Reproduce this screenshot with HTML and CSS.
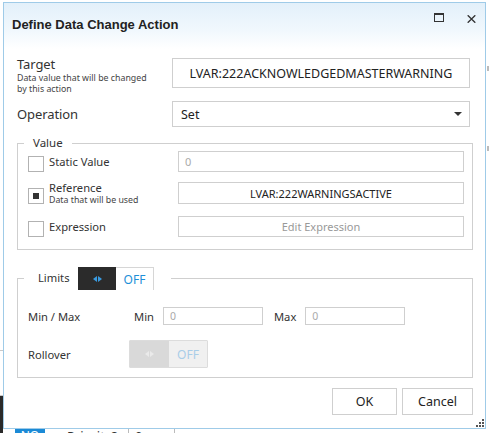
FILE: index.html
```html
<!DOCTYPE html>
<html>
<head>
<meta charset="utf-8">
<link rel="stylesheet" href="styles.css">
</head>
<body>
<div class="page">
  <div class="lstrip">
    <div class="lstrip-line l1"></div>
    <div class="lstrip-line l2"></div>
    <div class="lstrip-dark"></div>
  </div>
  <div class="col">
    <div class="window">
      <div class="titlebar">
        <div class="title">Define Data Change Action</div>
        <div class="tb-icons">
          <svg class="ic-max" width="10" height="9" viewBox="0 0 10 9"><rect x="0.5" y="1" width="9" height="7.5" fill="none" stroke="#333" stroke-width="1"/><line x1="0" y1="1" x2="10" y2="1" stroke="#333" stroke-width="2"/></svg>
          <svg class="ic-close" width="9" height="8" viewBox="0 0 9 8"><path d="M0.7 0.3 L8.3 7.7 M8.3 0.3 L0.7 7.7" stroke="#333" stroke-width="1.4" fill="none"/></svg>
        </div>
      </div>
      <div class="body">
        <div class="row row-target">
          <div class="lab">
            <div class="lab-main">Target</div>
            <div class="lab-sub">Data value that will be changed<br>by this action</div>
          </div>
          <div class="field field-target">LVAR:222ACKNOWLEDGEDMASTERWARNING</div>
        </div>
        <div class="row row-op">
          <div class="lab"><div class="lab-main">Operation</div></div>
          <div class="field field-select"><span>Set</span><span class="arrow"></span></div>
        </div>
        <fieldset class="group group-value">
          <legend class="leg-value">Value</legend>
          <div class="vrow vrow-static">
            <span class="cb"></span>
            <span class="vlab">Static Value</span>
            <div class="vfield vf-static">0</div>
          </div>
          <div class="vrow vrow-ref">
            <span class="cb cb-on"><span class="cb-dot"></span></span>
            <span class="vlab"><span class="vlab-main">Reference</span><span class="vlab-sub">Data that will be used</span></span>
            <div class="vfield vf-ref">LVAR:222WARNINGSACTIVE</div>
          </div>
          <div class="vrow vrow-expr">
            <span class="cb"></span>
            <span class="vlab">Expression</span>
            <div class="vfield vf-btn">Edit Expression</div>
          </div>
        </fieldset>
        <fieldset class="group group-limits">
          <legend class="leg-limits">
            <span class="leg-text">Limits</span>
            <span class="toggle">
              <span class="tg-knob"><span class="tri tri-l"></span><span class="tri tri-r"></span></span>
              <span class="tg-off">OFF</span>
            </span>
          </legend>
          <div class="lrow lrow-minmax">
            <span class="llab">Min / Max</span>
            <span class="mlab mlab-min">Min</span>
            <div class="mfield">0</div>
            <span class="mlab mlab-max">Max</span>
            <div class="mfield">0</div>
          </div>
          <div class="lrow lrow-roll">
            <span class="llab">Rollover</span>
            <span class="toggle toggle-dis">
              <span class="tg-knob"><span class="tri tri-l"></span><span class="tri tri-r"></span></span>
              <span class="tg-off">OFF</span>
            </span>
          </div>
        </fieldset>
        <div class="buttons">
          <div class="btn btn-ok">OK</div>
          <div class="btn btn-cancel">Cancel</div>
        </div>
      </div>
      <div class="grip">
        <span class="gd g1"></span><span class="gd g2"></span><span class="gd g3"></span><span class="gd g4"></span><span class="gd g5"></span><span class="gd g6"></span>
      </div>
    </div>
    <div class="bgrow">
      <span class="bg-no">NO</span>
      <span class="bg-prio">Priority?</span>
      <span class="bg-cell">0</span>
    </div>
  </div>
  <div class="rstrip">
    <div class="rmark m1"></div>
    <div class="rmark m2"></div>
  </div>
</div>
</body>
</html>
```

FILE: styles.css
```css
* { box-sizing: border-box; }
html, body { margin: 0; padding: 0; background: #fff; }
body {
  font-family: "Noto Sans", "Open Sans", sans-serif;
  color: #333;
  width: 489px;
  height: 433px;
  overflow: hidden;
}
.page { display: flex; width: 489px; height: 433px; }
.lstrip { width: 3px; flex: none; }
.lstrip-line { height: 1px; background: #c9c9c9; }
.l1 { margin-top: 350px; }
.l2 { margin-top: 44px; }
.lstrip-dark { height: 38px; background: #2a2a2a; }
.col { width: 483px; flex: none; padding-top: 2px; }
.rstrip { flex: 1; }
.rmark { width: 2px; height: 5px; background: #bbb; margin-left: 1px; }
.m1 { margin-top: 66px; }
.m2 { margin-top: 75px; }

.window {
  position: relative;
  width: 483px;
  height: 427px;
  border: 1px solid #9fcbe8;
  background: linear-gradient(#e3f0fa 0px, #f1f8fd 28px, #ffffff 46px);
}
.titlebar {
  height: 42px;
  display: flex;
  align-items: center;
  justify-content: space-between;
  padding: 0 9px 0 8px;
}
.title {
  font-family: "Liberation Sans", Arial, sans-serif;
  font-weight: bold;
  font-size: 13px;
  color: #222;
  margin-top: 1px;
}
.tb-icons { display: flex; align-items: flex-start; gap: 23px; margin-top: -12px; }
.ic-max { display: block; }
.ic-close { display: block; margin-top: 2px; }

.body { padding: 0 11px 0 13px; }
.row { display: flex; }
.lab { width: 155px; flex: none; }
.lab-main { font-size: 13px; color: #333; line-height: 16px; letter-spacing: -0.1px; }
.lab-sub { font-size: 8.8px; color: #444; line-height: 11px; margin-top: 1px; }
.row-target { margin-top: 11px; height: 45px; }
.field {
  border: 1px solid #cfcfcf;
  background: #fff;
  width: 298px;
  font-size: 12.5px;
  color: #222;
}
.field-target {
  height: 30px;
  margin-top: 2px;
  display: flex; align-items: center; justify-content: center;
}
.row-op { align-items: center; height: 26px; }
.row-op .lab { margin-top: -1px; }
.field-select {
  height: 26px;
  display: flex; align-items: center; justify-content: space-between;
  padding: 0 7px 0 8px;
}
.arrow {
  width: 0; height: 0;
  border-left: 4px solid transparent;
  border-right: 4px solid transparent;
  border-top: 4px solid #333;
}

.group {
  border: 1px solid #cfcfcf;
  margin: 0;
  width: 456px;
  padding: 0;
  min-inline-size: 0;
}
.group-value { margin-top: 9px; height: 114px; }
.leg-value { font-size: 11.5px; color: #333; padding: 0 9px; margin-left: 6px; line-height: 14px; height: 14px; }
.vrow { display: flex; align-items: flex-end; margin-left: 10px; }
.cb {
  width: 16px; height: 16px; flex: none;
  border: 1px solid #b2b2b2;
  background: #fff;
  display: flex; align-items: center; justify-content: center;
}
.cb-dot { width: 6px; height: 6px; background: #333; }
.vlab { width: 134px; flex: none; padding-left: 5px; font-size: 11.2px; color: #333; align-self: center; }
.vlab-main { display: block; line-height: 13px; }
.vlab-sub { display: block; font-size: 8.8px; line-height: 11px; color: #444; margin-top: 1px; }
.vfield {
  width: 286px; height: 21px;
  border: 1px solid #cfcfcf;
  font-size: 11px;
  display: flex; align-items: center;
}
.vf-static { color: #aaa; padding-left: 6px; }
.vf-ref { justify-content: center; color: #222; height: 22px; }
.vf-btn { justify-content: center; color: #999; height: 21px; }
.vrow-static { margin-top: 1px; height: 21px; }
.vrow-ref { margin-top: 10px; height: 22px; }
.vrow-ref .vlab { margin-top: 1px; }
.vrow-expr { margin-top: 12px; height: 21px; }

.group-limits { margin-top: 17px; height: 111px; }
.leg-limits { display: flex; align-items: center; padding: 0 17px 0 14px; margin-left: 6px; height: 23px; }
.leg-text { font-size: 11.2px; color: #333; margin-right: 12px; margin-top: -3px; width: 28px; }
.toggle { display: flex; height: 23px; }
.tg-knob {
  width: 38px; background: #2b2b2b;
  display: flex; align-items: center; justify-content: center; gap: 1px;
}
.tri { width: 0; height: 0; border-top: 3px solid transparent; border-bottom: 3px solid transparent; }
.tri-l { border-right: 4px solid #3a9be0; }
.tri-r { border-left: 4px solid #3a9be0; }
.tg-off {
  width: 38px;
  border: 1px solid #d6d6d6; border-left: none; border-bottom: none;
  color: #1e8fd8; font-size: 12px;
  display: flex; align-items: center; justify-content: center;
  background: #fff;
}
.lrow { display: flex; align-items: center; margin-left: 10px; }
.llab { width: 106px; flex: none; font-size: 11.2px; color: #333; }
.lrow-minmax { margin-top: 17px; height: 18px; }
.mlab { font-size: 11.2px; color: #333; }
.mlab-min { margin-right: 9px; }
.mlab-max { margin-left: 11px; margin-right: 9px; }
.mfield {
  width: 100px; height: 18px;
  border: 1px solid #cfcfcf;
  font-size: 10.5px; color: #aaa;
  padding-left: 6px;
  display: flex; align-items: center;
}
.lrow-roll { margin-top: 15px; }
.toggle-dis { height: 28px; border: 1px solid #dcdcdc; border-radius: 1px; margin-left: -5px; }
.toggle-dis .tg-knob { background: #d9d9d9; width: 39px; }
.toggle-dis .tri-l { border-right-color: #eaeaea; }
.toggle-dis .tri-r { border-left-color: #eaeaea; }
.toggle-dis .tg-off { background: #f0f0f0; border: none; color: #a9cde8; width: 38px; font-size: 12px; }

.buttons { display: flex; justify-content: flex-end; gap: 5px; margin-top: 10px; width: 456px; }
.btn {
  height: 27px;
  border: 1px solid #cfcfcf;
  background: #fff;
  font-size: 12.5px;
  color: #222;
  display: flex; align-items: center; justify-content: center;
}
.btn-ok { width: 65px; }
.btn-cancel { width: 71px; }

.grip { position: absolute; right: 1px; bottom: 0px; width: 9px; height: 9px; }
.gd { position: absolute; width: 2px; height: 2px; background: #555; }
.g1 { right: 0; top: 0; }
.g2 { right: 3px; top: 3px; }
.g3 { right: 0; top: 3px; }
.g4 { right: 6px; top: 6px; }
.g5 { right: 3px; top: 6px; }
.g6 { right: 0; top: 6px; }

.bgrow { height: 4px; overflow: hidden; display: flex; align-items: flex-start; }
.bg-no { width: 30px; margin-left: 12px; height: 6px; background: #1b8ad6; color: #fff; font-size: 12px; line-height: 14px; text-align: center; }
.bg-prio { margin-left: 20px; width: 63px; font-size: 13px; line-height: 14px; color: #333; padding-left: 2px; }
.bg-cell { border-left: 1px solid #bbb; border-right: 1px solid #bbb; width: 47px; height: 6px; padding-left: 6px; font-size: 13px; line-height: 14px; color: #333; }
```
